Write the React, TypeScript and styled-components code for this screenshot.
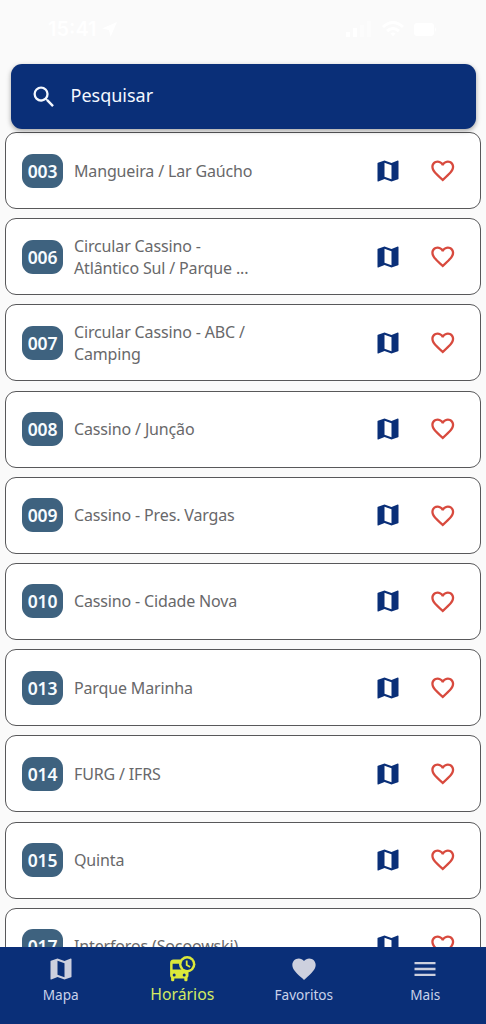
import React from "react";
import styled, { createGlobalStyle } from "styled-components";
import { MdFavorite, MdFavoriteBorder, MdMap, MdMenu, MdSearch } from "react-icons/md";

const GlobalStyle = createGlobalStyle`
  * { box-sizing: border-box; }
  body { margin: 0; background: #fafafa; font-family: "Noto Sans", sans-serif; }
`;

const Screen = styled.div`
  display: flex;
  flex-direction: column;
  height: 1024px;
  overflow: hidden;
  background: #fafafa;
`;

const StatusBar = styled.header`
  flex: none;
  height: 64px;
  padding: 0 50px 6px 48px;
  display: flex;
  align-items: center;
  justify-content: space-between;
  color: #fff;
`;

const Clock = styled.div`
  display: flex;
  align-items: center;
  gap: 5px;
  font: 600 20px Inter, sans-serif;
`;

const Signals = styled.div`
  display: flex;
  align-items: center;
  gap: 10px;
`;

const SearchBar = styled.div`
  flex: none;
  position: relative;
  z-index: 1;
  height: 65px;
  margin: 0 10.5px;
  padding: 0 19px;
  display: flex;
  align-items: center;
  gap: 13px;
  border-radius: 11px;
  background: #0a2f78;
  color: #f4f8ff;
  box-shadow: 0 2px 5px rgba(0, 0, 0, 0.35);
`;

const SearchLabel = styled.span`
  font-size: 18px;
  line-height: 24px;
  padding-bottom: 3px;
`;

const List = styled.main`
  flex: 1;
  min-height: 0;
  overflow: hidden;
  padding: 3px 5px 0;
  display: flex;
  flex-direction: column;
  gap: 9.2px;
`;

const Card = styled.article`
  flex: none;
  height: 77px;
  padding: 0 24px 0 16px;
  display: flex;
  align-items: center;
  border: 1px solid #58585a;
  border-radius: 11px;
  background: #fff;
`;

const Code = styled.span`
  flex: none;
  width: 41px;
  height: 34px;
  display: grid;
  place-items: center;
  border-radius: 11px;
  background: #3e627f;
  color: #f7fcff;
  font-size: 17.5px;
  font-weight: 600;
  letter-spacing: -0.2px;
`;

const RouteName = styled.span`
  flex: 1;
  margin-left: 11px;
  white-space: pre-line;
  color: #68686a;
  font-size: 16px;
  letter-spacing: -0.15px;
  line-height: 22px;
`;

const Actions = styled.div`
  flex: none;
  display: flex;
  align-items: center;
  gap: 27px;
`;

const BottomNav = styled.nav`
  flex: none;
  height: 77px;
  display: grid;
  grid-template-columns: repeat(4, 1fr);
  background: #0a2f78;
`;

const Tab = styled.div<{ $active?: boolean }>`
  display: flex;
  flex-direction: column;
  align-items: center;
  padding-top: 8px;
  color: ${(p) => (p.$active ? "#dce83a" : "#cdd0de")};
`;

const TabLabel = styled.span<{ $active?: boolean }>`
  font-size: ${(p) => (p.$active ? "15.8px" : "13.6px")};
  line-height: 20px;
  margin-top: ${(p) => (p.$active ? "1px" : "2px")};
  color: ${(p) => (p.$active ? "#d2ea62" : "#c9d2ea")};
`;

const BusClock = () => (
  <svg width="28" height="28" viewBox="0 0 28 28" fill="currentColor">
    <path d="M5.500 4.500H13V15H20.500V20.500q0 1.400-1 2.200V25q0 1.200-1.200 1.200h-.8q-1.200 0-1.200-1.200v-1.600H6.300V25q0 1.200-1.200 1.200h-.8Q3.100 26.200 3.100 25v-2.300q-1-.8-1-2.200V8q0-3.500 3.400-3.500z" />
    <path d="M4.600 8.800h7.600q.3 3.600 3.200 5.700H4.600z" fill="#0a2f78" />
    <circle cx="6.200" cy="20" r="1.500" fill="#0a2f78" />
    <circle cx="16.200" cy="20" r="1.500" fill="#0a2f78" />
    <circle cx="19.200" cy="9.300" r="8.200" />
    <circle cx="19.200" cy="9.300" r="5.700" fill="#0a2f78" />
    <path d="M18.700 5.500v4.400l3.400 2.200" fill="none" stroke="currentColor" strokeWidth="1.800" />
  </svg>
);

const routes: [string, string][] = [
  ["003", "Mangueira / Lar Gaúcho"],
  ["006", "Circular Cassino -\nAtlântico Sul / Parque ..."],
  ["007", "Circular Cassino - ABC /\nCamping"],
  ["008", "Cassino / Junção"],
  ["009", "Cassino - Pres. Vargas"],
  ["010", "Cassino - Cidade Nova"],
  ["013", "Parque Marinha"],
  ["014", "FURG / IFRS"],
  ["015", "Quinta"],
  ["017", "Interforos (Socoowski)"],
];

export default function App() {
  return (
    <Screen>
      <GlobalStyle />
      <StatusBar>
        <Clock>
          15:41
          <svg width="15" height="15" viewBox="0 0 15 15" fill="currentColor">
            <path d="M15 0 8.500 15 7 8 0 6.500z" />
          </svg>
        </Clock>
        <Signals>
          <svg width="26" height="16" viewBox="0 0 26 16" fill="currentColor">
            <path d="M0 11h4v5H0zM7 7h4v9H7z" />
            <path d="M14 4h4v12h-4zM21 0h4v16h-4z" opacity=".35" />
          </svg>
          <svg width="22" height="16" viewBox="0 0 22 16" fill="none" stroke="currentColor" strokeWidth="3">
            <path d="M1 6Q11-3 21 6M5 10q6-5 12 0" />
            <path d="m8.500 12.500 2.500 3 2.500-3q-2.500-2-5 0z" fill="currentColor" stroke="none" />
          </svg>
          <svg width="22" height="13" viewBox="0 0 22 13" fill="currentColor">
            <rect width="20" height="13" rx="3" />
            <path d="M21 4q2 2.500 0 5z" />
          </svg>
        </Signals>
      </StatusBar>
      <SearchBar>
        <MdSearch size={28} />
        <SearchLabel>Pesquisar</SearchLabel>
      </SearchBar>
      <List>
        {routes.map(([code, name]) => (
          <Card key={code}>
            <Code>{code}</Code>
            <RouteName>{name}</RouteName>
            <Actions>
              <MdMap size={28} color="#0a2f78" />
              <MdFavoriteBorder size={27.500} color="#d84a3e" />
            </Actions>
          </Card>
        ))}
      </List>
      <BottomNav>
        <Tab>
          <MdMap size={28} />
          <TabLabel>Mapa</TabLabel>
        </Tab>
        <Tab $active>
          <BusClock />
          <TabLabel $active>Horários</TabLabel>
        </Tab>
        <Tab>
          <MdFavorite size={28} />
          <TabLabel>Favoritos</TabLabel>
        </Tab>
        <Tab>
          <MdMenu size={28} />
          <TabLabel>Mais</TabLabel>
        </Tab>
      </BottomNav>
    </Screen>
  );
}
